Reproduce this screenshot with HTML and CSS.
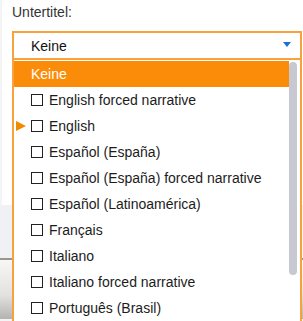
FILE: index.html
```html
<!DOCTYPE html>
<html lang="de">
<head>
    <meta charset="UTF-8">
    <meta name="viewport" content="width=device-width, initial-scale=1.0">
    <title>Untertitel</title>
    <link rel="stylesheet" href="styles.css">
</head>
<body>
    <div class="panel">
        <label class="field-label" for="subs">Untertitel:</label>
        <div class="dropdown" id="subs">
            <div class="select-box">
                <span class="current">Keine</span>
                <span class="caret"></span>
            </div>
            <div class="option-list">
                <ul class="options">
                    <li class="option selected"><span class="mark"></span>Keine</li>
                    <li class="option"><span class="mark"></span><span class="check"></span>English forced narrative</li>
                    <li class="option"><span class="mark"><span class="pointer"></span></span><span class="check"></span>English</li>
                    <li class="option"><span class="mark"></span><span class="check"></span>Español (España)</li>
                    <li class="option"><span class="mark"></span><span class="check"></span>Español (España) forced narrative</li>
                    <li class="option"><span class="mark"></span><span class="check"></span>Español (Latinoamérica)</li>
                    <li class="option"><span class="mark"></span><span class="check"></span>Français</li>
                    <li class="option"><span class="mark"></span><span class="check"></span>Italiano</li>
                    <li class="option"><span class="mark"></span><span class="check"></span>Italiano forced narrative</li>
                    <li class="option"><span class="mark"></span><span class="check"></span>Português (Brasil)</li>
                </ul>
                <div class="scrollbar">
                    <div class="thumb"></div>
                </div>
            </div>
        </div>
    </div>
    <div class="backdrop">
        <div class="backdrop-strip"></div>
        <div class="backdrop-photo"></div>
    </div>
</body>
</html>
```

FILE: styles.css
```css
* {
    box-sizing: border-box;
}

body {
    margin: 0;
    height: 321px;
    overflow: hidden;
    background-color: #f4f4f6;
    font-family: 'Liberation Sans', Arial, sans-serif;
    font-size: 14px;
    color: #222;
}

.panel {
    position: relative;
    margin-left: 2px;
    height: 205px;
    padding: 4px 0 0 10px;
    background-color: #fff;
}

.field-label {
    display: block;
    line-height: 16px;
    color: #333;
}

.dropdown {
    position: relative;
    margin-top: 11px;
    width: 290px;
    z-index: 2;
}

.select-box {
    display: flex;
    align-items: center;
    justify-content: space-between;
    height: 29px;
    padding: 0 9px 0 17px;
    border: 2px solid #f8a23e;
    background-color: #fff;
    color: #111;
}

.caret {
    width: 0;
    height: 0;
    margin-top: -2px;
    border-left: 4px solid transparent;
    border-right: 4px solid transparent;
    border-top: 5px solid #1a6fd8;
}

.option-list {
    position: absolute;
    top: 29px;
    left: 0;
    width: 290px;
    height: 270px;
    display: flex;
    padding-top: 1px;
    border-left: 2px solid #f8a23e;
    border-right: 2px solid #f8a23e;
    background-color: #fff;
}

.options {
    flex: 1;
    list-style: none;
    margin: 0;
    padding: 0;
}

.option {
    display: flex;
    align-items: center;
    height: 26px;
    padding-left: 2px;
    color: #1c1c1c;
    white-space: nowrap;
}

.option.selected {
    background-color: #fb8c0a;
    color: #fff;
}

.mark {
    display: flex;
    align-items: center;
    width: 15px;
    height: 100%;
}

.pointer {
    width: 0;
    height: 0;
    border-top: 5.5px solid transparent;
    border-bottom: 5.5px solid transparent;
    border-left: 10px solid #f08a00;
}

.check {
    width: 12px;
    height: 12px;
    margin-right: 6px;
    border: 1px solid #222;
    background-color: #fff;
}

.scrollbar {
    width: 11px;
    padding-top: 1px;
}

.thumb {
    width: 8px;
    height: 213px;
    border-radius: 4px;
    background-color: #c8c8d2;
}

.backdrop-strip {
    height: 55px;
    background-color: #eff1f4;
    border-bottom: 2px solid #9a958f;
}

.backdrop-photo {
    height: 59px;
    background: linear-gradient(#f8f7f5, #e2e1df 60%, #b4b3b1);
}
```
